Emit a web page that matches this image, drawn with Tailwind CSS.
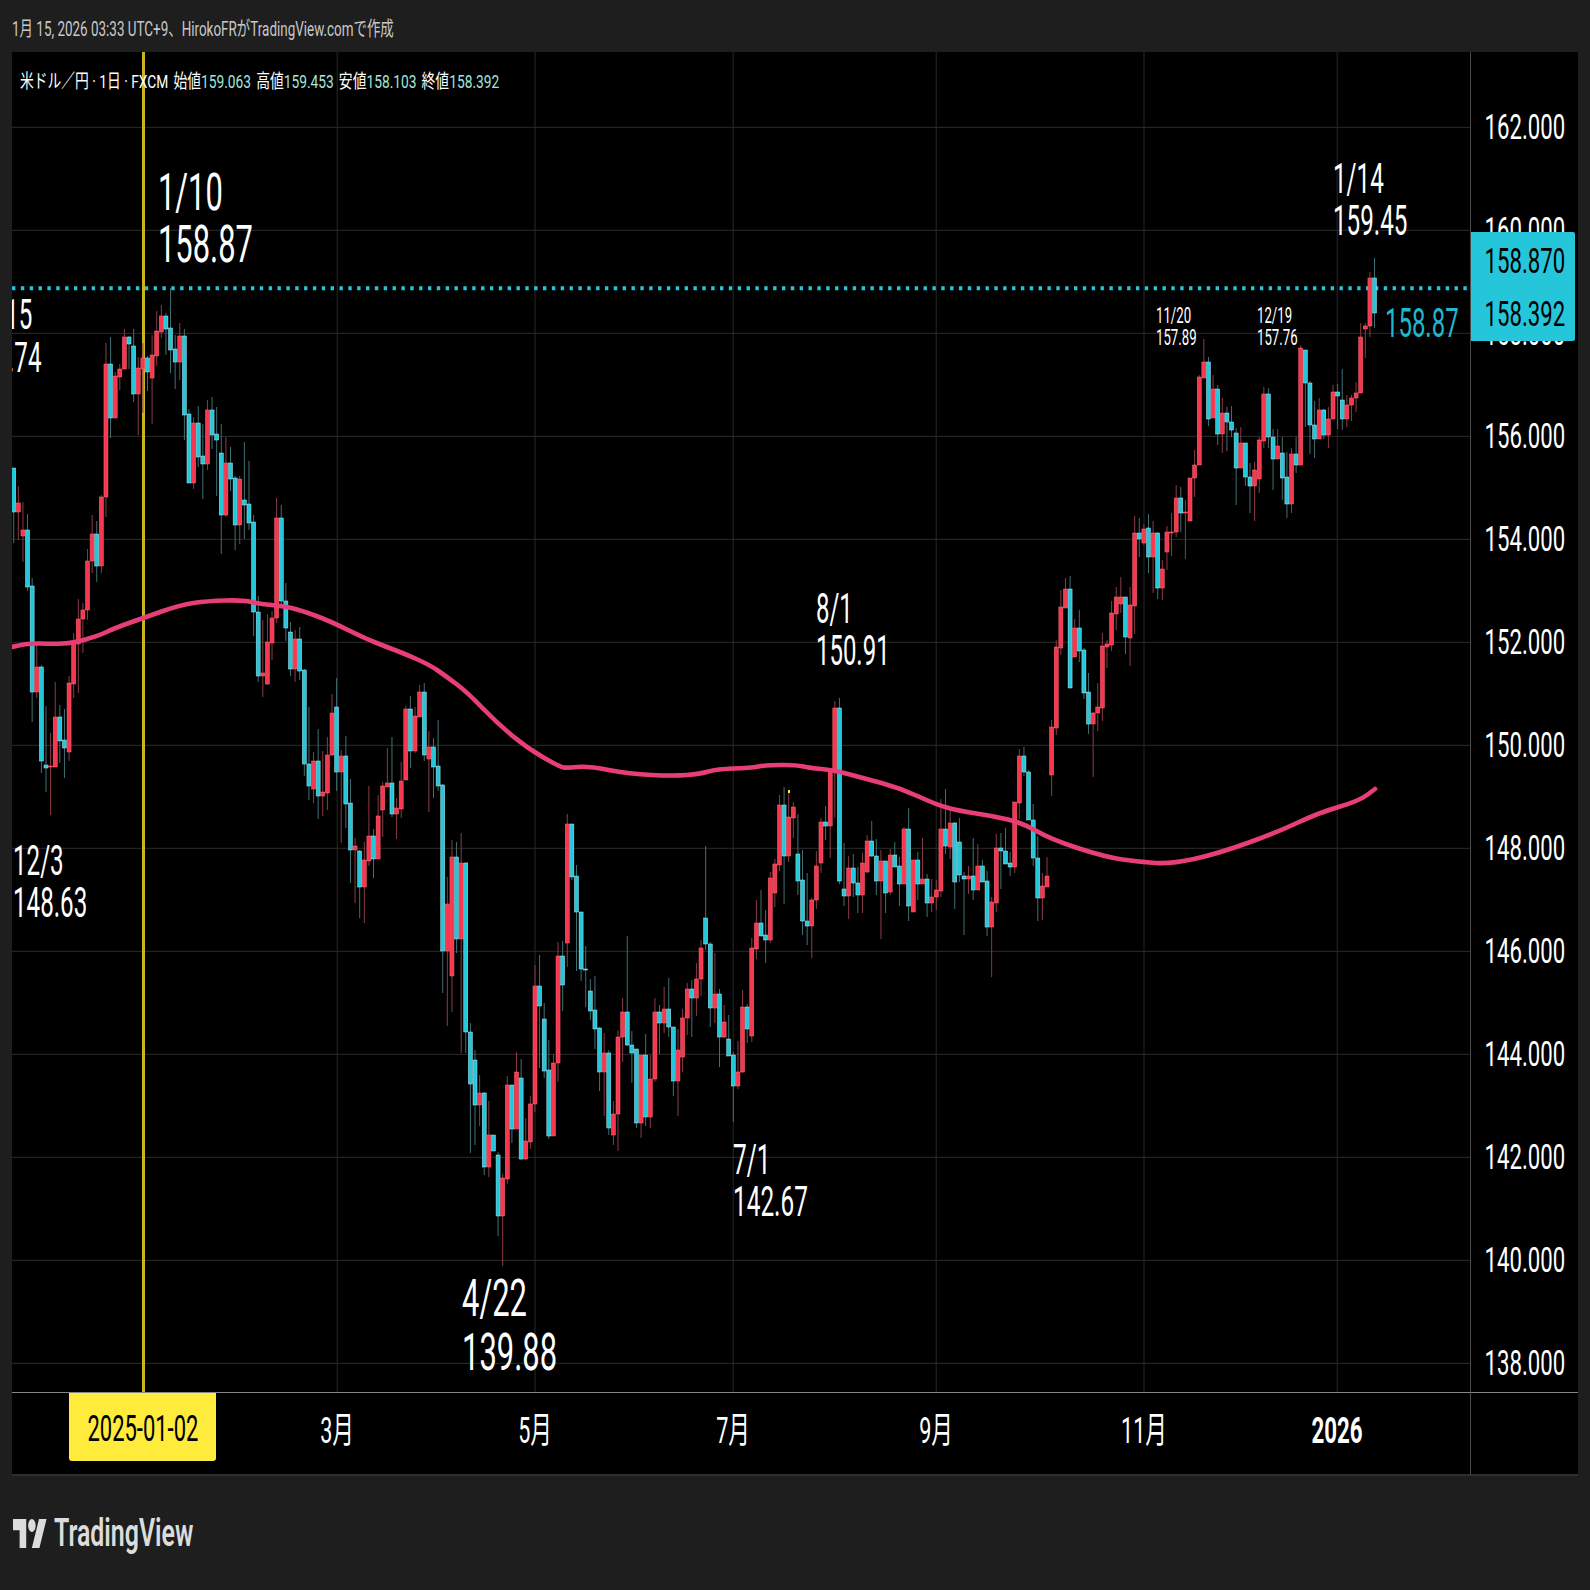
<!DOCTYPE html>
<html lang="ja">
<head>
<meta charset="utf-8">
<title>米ドル/円</title>
<script src="https://cdn.jsdelivr.net/npm/@tailwindcss/browser@4"></script>
</head>
<body class="m-0">
<div class="w-[1590px] h-[1590px] overflow-hidden bg-[#1e1e1e] flex flex-col pl-[12px] [font-family:Roboto,'Noto_Sans_CJK_JP',sans-serif]">
  <header class="h-[52px] pt-[6px] flex items-center shrink-0">
    <div class="whitespace-nowrap origin-left scale-x-[0.672] text-[20px] leading-none text-[#c8c8c8]">1月 15, 2026 03:33 UTC+9、HirokoFRがTradingView.comで作成</div>
  </header>

  <main class="w-[1566px] h-[1424px] shrink-0 bg-black grid grid-cols-[1458px_108px] grid-rows-[1340px_84px]">
    <section class="relative overflow-hidden">
      <svg class="absolute inset-0" width="1458" height="1340" viewBox="12 52 1458 1340">
        <g stroke="#1b1b1b" stroke-width="1.5">
          <path d="M337.3 52V1392M535 52V1392M733.3 52V1392M936.3 52V1392M1144 52V1392M1337.3 52V1392"/>
        </g>
        <g stroke="#2c2c2c" stroke-width="1">
          <path d="M12 127.3H1470M12 230.3H1470M12 333.3H1470M12 436.3H1470M12 539.3H1470M12 642.3H1470M12 745.3H1470M12 848.3H1470M12 951.3H1470M12 1054.3H1470M12 1157.3H1470M12 1260.3H1470M12 1363.3H1470"/>
        </g>
        <line x1="12" y1="288.3" x2="1470" y2="288.3" stroke="#26c6da" stroke-width="4" stroke-dasharray="3.4 5.45"/>
        <rect x="142" y="52" width="3" height="1340" fill="#c9b51f"/>
        <g id="candles"></g>
        <rect x="788" y="790" width="2" height="3" fill="#ffeb3b"/>
        <path id="ma" fill="none" stroke="#e83e78" stroke-width="4.6" stroke-linejoin="round" stroke-linecap="round" d="M12 647L1375 789"/>
      </svg>

      <div class="absolute left-[8px] top-[20px] flex items-center gap-[7px] whitespace-nowrap origin-left scale-x-[0.725] text-[19px] leading-[20px] text-white">
        <span>米ドル／円 · 1日 · FXCM</span>
        <span>始値<span class="text-[#a3e4dd]">159.063</span></span>
        <span>高値<span class="text-[#a3e4dd]">159.453</span></span>
        <span>安値<span class="text-[#a3e4dd]">158.103</span></span>
        <span>終値<span class="text-[#a3e4dd]">158.392</span></span>
      </div>

      <div class="absolute left-[146px] top-[115px] flex flex-col origin-top-left scale-x-[0.594] text-[52px] leading-[52px] text-white whitespace-nowrap"><span>1/10</span><span>158.87</span></div>
      <div class="absolute left-[-4px] top-[241px] flex flex-col origin-top-left scale-x-[0.575] text-[42px] leading-[43px] text-white whitespace-nowrap"><span class="-ml-[5px]">15</span><span>.74</span></div>
      <div class="absolute left-[1px] top-[788px] flex flex-col origin-top-left scale-x-[0.575] text-[42px] leading-[42px] text-white whitespace-nowrap"><span>12/3</span><span>148.63</span></div>
      <div class="absolute left-[450px] top-[1220px] flex flex-col origin-top-left scale-x-[0.595] text-[52px] leading-[54px] text-white whitespace-nowrap"><span>4/22</span><span>139.88</span></div>
      <div class="absolute left-[721px] top-[1087px] flex flex-col origin-top-left scale-x-[0.58] text-[42px] leading-[42px] text-white whitespace-nowrap"><span>7/1</span><span>142.67</span></div>
      <div class="absolute left-[804px] top-[536px] flex flex-col origin-top-left scale-x-[0.57] text-[42px] leading-[42px] text-white whitespace-nowrap"><span>8/1</span><span>150.91</span></div>
      <div class="absolute left-[1321px] top-[106px] flex flex-col origin-top-left scale-x-[0.576] text-[42px] leading-[42px] text-white whitespace-nowrap"><span>1/14</span><span>159.45</span></div>
      <div class="absolute left-[1144px] top-[253px] flex flex-col origin-top-left scale-x-[0.6] text-[22px] leading-[21.5px] text-white whitespace-nowrap"><span>11/20</span><span>157.89</span></div>
      <div class="absolute left-[1245px] top-[253px] flex flex-col origin-top-left scale-x-[0.6] text-[22px] leading-[21.5px] text-white whitespace-nowrap"><span>12/19</span><span>157.76</span></div>
      <div class="absolute left-[1373px] top-[251px] origin-top-left scale-x-[0.584] text-[41px] leading-[41px] text-[#1fb8cf] whitespace-nowrap">158.87</div>
    </section>

    <aside class="relative overflow-hidden border-l border-[#4a4a4a] pt-[25px] flex flex-col text-[35px] text-white">
      <div class="h-[103px] shrink-0 flex items-center justify-end pr-[13px]"><span class="origin-right scale-x-[0.634]">162.000</span></div>
      <div class="h-[103px] shrink-0 flex items-center justify-end pr-[13px]"><span class="origin-right scale-x-[0.634]">160.000</span></div>
      <div class="h-[103px] shrink-0 flex items-center justify-end pr-[13px]"><span class="origin-right scale-x-[0.634]">158.000</span></div>
      <div class="h-[103px] shrink-0 flex items-center justify-end pr-[13px]"><span class="origin-right scale-x-[0.634]">156.000</span></div>
      <div class="h-[103px] shrink-0 flex items-center justify-end pr-[13px]"><span class="origin-right scale-x-[0.634]">154.000</span></div>
      <div class="h-[103px] shrink-0 flex items-center justify-end pr-[13px]"><span class="origin-right scale-x-[0.634]">152.000</span></div>
      <div class="h-[103px] shrink-0 flex items-center justify-end pr-[13px]"><span class="origin-right scale-x-[0.634]">150.000</span></div>
      <div class="h-[103px] shrink-0 flex items-center justify-end pr-[13px]"><span class="origin-right scale-x-[0.634]">148.000</span></div>
      <div class="h-[103px] shrink-0 flex items-center justify-end pr-[13px]"><span class="origin-right scale-x-[0.634]">146.000</span></div>
      <div class="h-[103px] shrink-0 flex items-center justify-end pr-[13px]"><span class="origin-right scale-x-[0.634]">144.000</span></div>
      <div class="h-[103px] shrink-0 flex items-center justify-end pr-[13px]"><span class="origin-right scale-x-[0.634]">142.000</span></div>
      <div class="h-[103px] shrink-0 flex items-center justify-end pr-[13px]"><span class="origin-right scale-x-[0.634]">140.000</span></div>
      <div class="h-[103px] shrink-0 flex items-center justify-end pr-[13px]"><span class="origin-right scale-x-[0.634]">138.000</span></div>
      <div class="absolute left-0 top-[180px] w-[104px] h-[109px] bg-[#26c6da] rounded-r-[2px] flex flex-col text-black">
        <div class="h-[54px] pt-[6px] flex items-center justify-end pr-[10px]"><span class="origin-right scale-x-[0.634]">158.870</span></div>
        <div class="h-[55px] pt-[4px] flex items-center justify-end pr-[10px]"><span class="origin-right scale-x-[0.634]">158.392</span></div>
      </div>
    </aside>

    <section class="relative border-t border-[#868686] border-b-2 border-b-[#2e2e2e] text-[36px] text-white">
      <div class="absolute left-[57px] top-0 w-[147px] h-[68px] pt-[4px] bg-[#ffeb3b] rounded-b-[3px] flex items-center justify-center text-black whitespace-nowrap"><span class="scale-x-[0.61]">2025-01-02</span></div>
      <span class="absolute left-[325px] top-[11px] -translate-x-1/2 scale-x-[0.6]">3月</span>
      <span class="absolute left-[523px] top-[11px] -translate-x-1/2 scale-x-[0.6]">5月</span>
      <span class="absolute left-[721px] top-[11px] -translate-x-1/2 scale-x-[0.6]">7月</span>
      <span class="absolute left-[924px] top-[11px] -translate-x-1/2 scale-x-[0.6]">9月</span>
      <span class="absolute left-[1132px] top-[11px] -translate-x-1/2 scale-x-[0.6]">11月</span>
      <span class="absolute left-[1325px] top-[11px] -translate-x-1/2 scale-x-[0.62] font-bold">2026</span>
    </section>
    <div class="border-l border-t border-[#868686] border-l-[#4a4a4a] border-b-2 border-b-[#2e2e2e]"></div>
  </main>

  <footer class="flex-1 flex items-center gap-[7px] pl-[1px]">
    <svg width="34" height="29" viewBox="0 4 36 18" preserveAspectRatio="none" fill="#dcdcdc" class="shrink-0">
      <path d="M14 22H7V11H0V4h14v18zM28 22h-8l7.5-18h8L28 22z"/>
      <circle cx="20" cy="8" r="4"/>
    </svg>
    <div class="origin-left scale-x-[0.655] text-[38px] leading-none font-semibold text-[#dcdcdc] whitespace-nowrap">TradingView</div>
  </footer>
</div>
<script>
var D=[[0,468,468,512,543],[1,486,503,512,540],[1,502,530,536,562],[0,514,530,587,591],[0,578,586,692,722],[1,643,667,692,698],[0,665,667,761,773],[0,706,765,768,792],[1,733,766,767,815],[1,682,717,767,767],[0,705,717,741,763],[0,709,740,748,778],[1,676,683,752,761],[1,633,643,684,698],[1,599,619,644,693],[1,603,610,619,653],[1,549,561,610,620],[1,515,534,561,573],[0,521,534,566,582],[1,495,497,566,573],[1,343,364,497,517],[0,337,364,418,438],[1,372,376,418,418],[1,364,369,377,390],[1,329,337,369,369],[0,336,337,344,369],[0,329,346,394,402],[1,357,368,394,435],[1,343,358,369,413],[0,356,358,372,391],[1,335,355,378,424],[1,311,331,356,366],[1,305,316,332,338],[0,313,316,329,355],[0,288,328,350,373],[0,335,349,362,389],[1,323,336,362,380],[0,329,336,415,440],[0,409,414,483,483],[1,417,423,483,489],[0,406,423,457,467],[0,424,456,464,499],[1,400,410,464,470],[0,397,410,435,449],[0,407,434,440,496],[0,424,453,515,554],[1,437,463,515,517],[0,447,463,479,491],[0,476,478,525,550],[1,476,479,525,544],[0,442,500,505,539],[0,461,504,523,530],[0,515,522,612,636],[0,596,612,676,682],[1,620,673,676,697],[1,614,642,684,685],[1,611,618,643,660],[1,498,518,618,623],[0,505,518,601,607],[0,583,601,628,641],[0,622,632,669,676],[1,630,639,669,682],[0,627,639,671,680],[0,669,670,764,776],[0,707,764,786,800],[1,752,761,789,803],[0,729,761,796,819],[1,751,792,796,816],[1,737,755,793,810],[1,694,713,755,756],[0,678,707,772,791],[1,750,756,772,843],[0,736,756,804,828],[0,779,803,850,883],[1,838,846,850,903],[0,850,851,887,918],[1,842,860,887,923],[1,786,836,861,866],[0,829,836,859,878],[1,795,816,859,859],[1,782,786,810,837],[1,748,783,787,787],[0,737,783,814,817],[1,798,808,814,839],[1,762,781,809,818],[1,706,709,780,780],[0,696,709,751,768],[1,707,716,751,753],[1,685,692,717,717],[0,683,692,755,761],[1,731,747,759,812],[0,738,747,767,798],[0,720,766,786,791],[0,784,785,951,993],[1,877,904,951,1026],[1,840,857,976,1012],[0,842,857,939,953],[1,833,863,939,1053],[0,862,863,1032,1053],[0,1023,1032,1084,1153],[0,1050,1060,1105,1145],[1,1075,1093,1105,1126],[0,1092,1093,1167,1175],[1,1101,1135,1167,1177],[0,1135,1135,1151,1151],[0,1152,1155,1216,1236],[1,1174,1178,1216,1266],[1,1076,1085,1179,1184],[0,1085,1085,1129,1143],[1,1052,1072,1129,1129],[0,1059,1078,1159,1160],[1,1118,1141,1159,1160],[1,1096,1104,1142,1149],[1,965,986,1104,1112],[0,955,986,1006,1068],[0,1003,1019,1071,1078],[0,1040,1070,1136,1139],[1,1054,1063,1136,1136],[1,942,956,1063,1082],[0,941,956,985,1011],[1,814,824,943,967],[0,824,824,877,880],[0,865,876,912,971],[0,912,912,969,981],[0,946,969,970,1007],[0,979,991,1011,1020],[0,976,1010,1029,1049],[0,1027,1028,1072,1091],[1,1033,1053,1072,1116],[0,1050,1053,1128,1135],[1,1101,1114,1135,1145],[1,1030,1037,1114,1151],[1,998,1012,1037,1062],[0,936,1012,1045,1046],[0,1031,1045,1053,1083],[0,1049,1049,1123,1128],[1,1055,1055,1123,1138],[0,1034,1055,1117,1126],[1,1055,1079,1117,1128],[1,998,1012,1079,1082],[0,1005,1012,1023,1054],[1,987,1009,1023,1033],[0,978,1009,1027,1037],[0,1027,1027,1081,1096],[1,1029,1050,1081,1116],[1,1009,1018,1057,1072],[1,983,989,1018,1035],[0,980,989,998,1037],[1,963,979,998,1016],[1,940,948,979,996],[0,846,918,944,950],[0,942,944,1008,1027],[1,953,994,1008,1023],[0,989,994,1037,1067],[1,1005,1022,1037,1038],[0,1015,1039,1056,1056],[0,1052,1055,1086,1122],[1,1041,1072,1086,1089],[1,990,1007,1072,1073],[0,1004,1007,1029,1043],[1,938,948,1036,1042],[1,900,923,949,959],[0,890,923,936,936],[0,910,935,940,963],[1,872,878,940,943],[1,859,864,893,907],[1,795,805,865,871],[0,787,805,856,904],[1,793,817,856,862],[1,802,807,818,838],[0,814,854,881,895],[0,850,880,921,935],[0,873,921,926,945],[1,898,900,926,958],[1,851,866,900,909],[1,818,822,863,873],[0,806,822,826,840],[1,768,772,826,858],[1,701,708,772,818],[0,698,708,881,884],[0,843,889,896,906],[1,856,868,896,919],[0,854,868,883,897],[0,867,883,895,913],[1,853,863,895,913],[1,835,841,872,873],[0,821,841,856,857],[0,839,856,881,895],[1,850,861,881,939],[0,861,861,893,913],[1,849,855,892,895],[0,842,855,867,867],[0,857,866,884,906],[1,827,829,884,884],[0,808,829,906,921],[1,860,860,912,912],[0,852,860,884,900],[1,838,879,884,884],[0,874,879,903,917],[1,879,897,903,912],[1,880,890,897,910],[1,799,829,891,897],[0,789,829,846,854],[1,808,823,847,859],[0,822,823,882,909],[0,818,842,875,882],[0,872,876,879,935],[1,866,876,879,894],[0,838,876,890,900],[1,844,866,890,890],[0,860,866,882,882],[0,871,881,927,936],[1,897,902,927,977],[1,834,848,903,912],[0,833,848,851,889],[0,828,851,864,864],[0,852,863,867,876],[1,802,802,867,873],[1,749,756,803,819],[0,747,756,772,776],[0,770,772,820,820],[0,804,820,858,866],[0,836,858,898,921],[1,873,886,898,920],[1,857,876,887,887],[1,720,727,775,796],[1,640,647,728,735],[1,590,607,648,655],[1,578,589,608,608],[0,576,589,688,688],[1,619,628,657,657],[0,610,628,651,662],[0,648,650,693,699],[0,673,692,724,734],[1,712,713,724,777],[1,683,707,713,731],[1,633,646,708,721],[1,640,644,647,668],[1,601,613,645,651],[1,587,597,614,630],[1,577,597,604,613],[0,597,597,637,654],[1,587,605,638,666],[1,516,533,606,634],[0,518,533,539,557],[1,524,529,543,545],[0,514,528,557,573],[1,521,533,557,593],[0,532,533,588,599],[1,560,569,588,600],[1,526,532,552,570],[1,513,532,533,556],[1,485,498,532,537],[0,487,498,513,532],[1,500,512,513,559],[1,478,478,521,521],[1,450,465,478,497],[1,375,377,465,465],[1,339,362,378,378],[0,357,362,419,426],[1,375,389,418,418],[0,385,389,434,445],[1,398,413,434,453],[0,407,413,422,451],[0,406,422,430,437],[0,428,433,468,505],[1,427,443,468,468],[0,443,443,477,486],[0,463,477,486,513],[1,462,470,486,521],[1,437,440,479,493],[1,387,394,441,448],[0,388,394,437,448],[0,429,437,459,490],[1,429,446,459,459],[0,437,453,478,500],[0,452,477,504,518],[1,448,454,504,513],[0,437,454,465,473],[1,345,348,465,465],[0,350,350,383,427],[0,381,383,425,454],[0,401,425,439,458],[1,398,410,439,439],[0,409,410,435,439],[1,407,419,435,448],[1,385,392,419,419],[0,384,392,396,429],[0,369,400,419,430],[1,395,405,419,427],[1,395,398,405,421],[1,382,393,398,412],[1,323,337,393,393],[1,323,326,329,358],[1,272,278,326,337],[0,258,278,313,328]];
var s='';
for(var k=0;k<D.length;k++){
  var d=D[k],x=13.7+4.613*k,c=d[0]?'#f7374f':'#26c6da',w=d[0]?'#8a3b45':'#3f7074',e=d[0]?'#ff6b7a':'#a8eaf2';
  s+='<rect x="'+(x-0.5).toFixed(2)+'" y="'+d[1]+'" width="1" height="'+(d[4]-d[1])+'" fill="'+w+'"/>';
  s+='<rect x="'+(x-2).toFixed(2)+'" y="'+d[2]+'" width="4" height="'+Math.max(d[3]-d[2],1)+'" fill="'+c+'" stroke="'+e+'" stroke-width="0.5"/>';
}
document.getElementById('candles').innerHTML=s;
var P=[[12,647],[27,643],[53,644],[73,643],[98,636],[115,628],[143,618],[180,605],[207,601],[243,600],[260,604],[283,606],[300,610],[330,621],[368,640],[403,653],[430,665],[447,677],[467,692],[497,723],[527,748],[560,767],[567,768],[588,766],[629,774],[674,776],[700,774],[717,769],[750,768],[767,765],[797,765],[810,768],[833,770],[863,778],[900,788],[937,805],[960,811],[993,816],[1023,823],[1050,839],[1105,857],[1140,862],[1171,864],[1217,854],[1278,832],[1318,813],[1359,801],[1375,789]];
var m='M'+P[0][0]+' '+P[0][1];
for(var i=1;i<P.length-1;i++){
  var mx=(P[i][0]+P[i+1][0])/2,my=(P[i][1]+P[i+1][1])/2;
  m+='Q'+P[i][0]+' '+P[i][1]+' '+mx+' '+my;
}
m+='L'+P[P.length-1][0]+' '+P[P.length-1][1];
document.getElementById('ma').setAttribute('d',m);
</script>
</body>
</html>
